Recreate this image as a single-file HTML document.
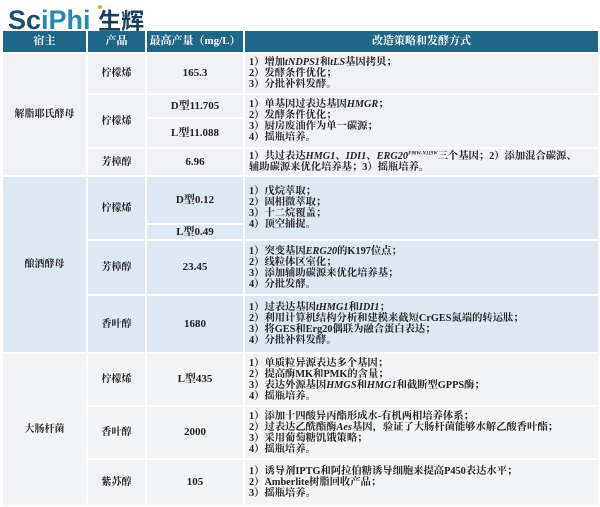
<!DOCTYPE html>
<html><head><meta charset="utf-8"><style>
body{margin:0;width:600px;height:507px;background:#fff;position:relative;overflow:hidden;font-family:"Liberation Serif","Noto Serif CJK SC",serif;font-weight:bold;color:#222;}
.c{position:absolute;box-sizing:border-box;font-size:10px;line-height:11px;display:flex;align-items:center;justify-content:center;text-align:center;}
.c>div{width:100%;white-space:nowrap}
.l{justify-content:flex-start;text-align:left;padding-left:4px;font-size:10.3px}
.n{font-size:11px}
.h{background:#1f6789;color:#fff;font-size:11px;}
.g1{background:#f1f2f5}.g2{background:#dde8f3}.g3{background:#f3f4f6}
i{font-style:italic}
.logo{position:absolute;left:8px;top:2px;font-family:"Liberation Sans","Noto Sans CJK SC",sans-serif;font-weight:bold;font-size:27px;letter-spacing:0px;white-space:nowrap}
</style></head><body>
<div class="logo"><span style="color:#1a4d70">Sc</span><span style="color:#2a86b8">iPhi</span> <span style="color:#1a3f5e;font-size:23px">生辉</span></div>
<span style="position:absolute;left:98px;top:5px;width:4px;height:4px;border-radius:2px;background:#f0a030"></span>

<div class="c h" style="left:3px;top:31px;width:83px;height:21px"><div>宿主</div></div>
<div class="c h" style="left:88px;top:31px;width:57px;height:21px"><div>产品</div></div>
<div class="c h" style="left:147px;top:31px;width:96px;height:21px"><div>最高产量（mg/L）</div></div>
<div class="c h" style="left:245px;top:31px;width:353px;height:21px"><div>改造策略和发酵方式</div></div>

<div class="c g1" style="left:3px;top:54px;width:83px;height:121px"><div>解脂耶氏酵母</div></div>
<div class="c g1" style="left:88px;top:54px;width:57px;height:39px"><div>柠檬烯</div></div>
<div class="c g1 n" style="left:147px;top:54px;width:96px;height:39px"><div>165.3</div></div>
<div class="c g1 l" style="left:245px;top:54px;width:353px;height:39px"><div>1）增加<i>tNDPS1</i>和<i>tLS</i>基因拷贝；<br>2）发酵条件优化；<br>3）分批补料发酵。</div></div>
<div class="c g1" style="left:88px;top:95px;width:57px;height:52px"><div>柠檬烯</div></div>
<div class="c g1 n" style="left:147px;top:95px;width:96px;height:22px"><div>D型11.705</div></div>
<div class="c g1 n" style="left:147px;top:119px;width:96px;height:28px"><div>L型11.088</div></div>
<div class="c g1 l" style="left:245px;top:95px;width:353px;height:52px"><div>1）单基因过表达基因<i>HMGR</i>；<br>2）发酵条件优化；<br>3）厨房废油作为单一碳源；<br>4）摇瓶培养。</div></div>
<div class="c g1" style="left:88px;top:149px;width:57px;height:26px"><div>芳樟醇</div></div>
<div class="c g1 n" style="left:147px;top:149px;width:96px;height:26px"><div>6.96</div></div>
<div class="c g1 l" style="left:245px;top:149px;width:353px;height:26px"><div>1）共过表达<i>HMG1</i>、<i>IDI1</i>、<i>ERG20</i><sup style="font-size:5px;font-style:italic;line-height:0">F88W-N119W</sup>三个基因；2）添加混合碳源、<br>辅助碳源来优化培养基；3）摇瓶培养。</div></div>

<div class="c g2" style="left:3px;top:177px;width:83px;height:175px"><div>酿酒酵母</div></div>
<div class="c g2" style="left:88px;top:177px;width:57px;height:62px"><div>柠檬烯</div></div>
<div class="c g2 n" style="left:147px;top:177px;width:96px;height:46px"><div>D型0.12</div></div>
<div class="c g2 n" style="left:147px;top:225px;width:96px;height:14px"><div>L型0.49</div></div>
<div class="c g2 l" style="left:245px;top:177px;width:353px;height:62px"><div>1）戊烷萃取；<br>2）固相微萃取；<br>3）十二烷覆盖；<br>4）顶空捕捉。</div></div>
<div class="c g2" style="left:88px;top:241px;width:57px;height:53px"><div>芳樟醇</div></div>
<div class="c g2 n" style="left:147px;top:241px;width:96px;height:53px"><div>23.45</div></div>
<div class="c g2 l" style="left:245px;top:241px;width:353px;height:53px"><div>1）突变基因<i>ERG20</i>的K197位点；<br>2）线粒体区室化；<br>3）添加辅助碳源来优化培养基；<br>4）分批发酵。</div></div>
<div class="c g2" style="left:88px;top:296px;width:57px;height:56px"><div>香叶醇</div></div>
<div class="c g2 n" style="left:147px;top:296px;width:96px;height:56px"><div>1680</div></div>
<div class="c g2 l" style="left:245px;top:296px;width:353px;height:56px"><div>1）过表达基因<i>tHMG1</i>和<i>IDI1</i>；<br>2）利用计算机结构分析和建模来截短CrGES氮端的转运肽；<br>3）将GES和Erg20偶联为融合蛋白表达；<br>4）分批补料发酵。</div></div>

<div class="c g3" style="left:3px;top:354px;width:83px;height:151px"><div>大肠杆菌</div></div>
<div class="c g3" style="left:88px;top:354px;width:57px;height:51px"><div>柠檬烯</div></div>
<div class="c g3 n" style="left:147px;top:354px;width:96px;height:51px"><div>L型435</div></div>
<div class="c g3 l" style="left:245px;top:354px;width:353px;height:51px"><div>1）单质粒异源表达多个基因；<br>2）提高酶MK和PMK的含量；<br>3）表达外源基因<i>HMGS</i>和<i>HMG1</i>和截断型GPPS酶；<br>4）摇瓶培养。</div></div>
<div class="c g3" style="left:88px;top:407px;width:57px;height:51px"><div>香叶醇</div></div>
<div class="c g3 n" style="left:147px;top:407px;width:96px;height:51px"><div>2000</div></div>
<div class="c g3 l" style="left:245px;top:407px;width:353px;height:51px"><div>1）添加十四酸异丙酯形成水-有机两相培养体系；<br>2）过表达乙酰酯酶<i>Aes</i>基因，验证了大肠杆菌能够水解乙酸香叶酯；<br>3）采用葡萄糖饥饿策略；<br>4）摇瓶培养。</div></div>
<div class="c g3" style="left:88px;top:460px;width:57px;height:45px"><div>紫苏醇</div></div>
<div class="c g3 n" style="left:147px;top:460px;width:96px;height:45px"><div>105</div></div>
<div class="c g3 l" style="left:245px;top:460px;width:353px;height:45px"><div>1）诱导剂IPTG和阿拉伯糖诱导细胞来提高P450表达水平；<br>2）Amberlite树脂回收产品；<br>3）摇瓶培养。</div></div>
</body></html>
